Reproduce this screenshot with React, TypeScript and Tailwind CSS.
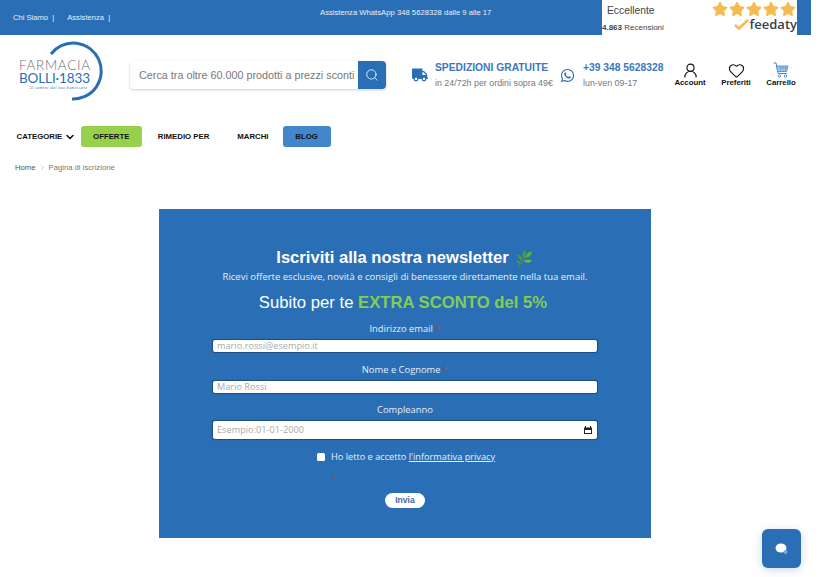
import { ChevronDown, ChevronRight, Heart, Search, UserRound } from "lucide-react";
import { FaStar, FaTruck, FaWhatsapp } from "react-icons/fa";

const sans = "font-['Liberation_Sans',Arial,sans-serif]";
const open = "font-['Open_Sans',sans-serif]";

const TopBar = () => (
    <div className={`flex h-[35px] bg-[#2a6fb5] text-white ${sans}`}>
        <div className="flex w-[602px] shrink-0">
            <div className="flex w-[307px] shrink-0 items-start gap-[13px] pl-[13px] pt-[12px] text-[7.6px] leading-[11px] text-[#e8f0f8]">
                <span>Chi Siamo &nbsp;|</span>
                <span>Assistenza &nbsp;|</span>
            </div>
            <div className="pl-[13px] pt-[8px] text-[7.7px] leading-[10px] text-[#e8f0f8]">
                Assistenza WhatsApp 348 5628328 dalle 9 alle 17
            </div>
        </div>
        <div className="flex w-[195px] shrink-0 justify-between bg-white text-[#444]">
            <div className="flex flex-col">
                <span className="pl-[5px] pt-[4px] text-[10.3px] leading-[14px]">Eccellente</span>
                <span className="pt-[4px] text-[8px] leading-[11px]">
                    <b>4.863</b> Recensioni
                </span>
            </div>
            <div className="flex flex-col items-end">
                <div className="flex gap-[1px] pr-[1px] pt-[1px] text-[#f3bb52]">
                    <FaStar size={16} />
                    <FaStar size={16} />
                    <FaStar size={16} />
                    <FaStar size={16} />
                    <FaStar size={16} />
                </div>
                <div className="flex items-center gap-[1px] text-[13px] leading-[14px] text-[#3a4049]">
                    <svg width="15" height="11" viewBox="0 0 15 11">
                        <path d="M1 6l4 3.5L14 1" fill="none" stroke="#f3bb52" strokeWidth="2.6" />
                    </svg>
                    <span className="font-['Open_Sans',sans-serif] font-semibold">feedaty</span>
                </div>
            </div>
        </div>
    </div>
);

const Logo = () => (
    <svg width="90" height="62" viewBox="0 0 90 62" className="mb-[8px] shrink-0">
        <path d="M 33 14 A 28 28 0 1 1 54 59" fill="none" stroke="#2a6fb5" strokeWidth="3" />
        <text x="1" y="30" fontFamily="Lato, sans-serif" fontWeight="300" fontSize="13.5" textLength="71" fill="#6b6f73">
            FARMACIA
        </text>
        <text x="1" y="43" fontFamily="Lato, sans-serif" fontWeight="400" fontSize="13.5" textLength="71" fill="#2a6fb5">
            BOLLI·1833
        </text>
        <text x="11" y="48.5" fontFamily="'Liberation Serif', serif" fontStyle="italic" fontSize="4.4" textLength="58" fill="#2a6fb5">
            Al centro del tuo benessere
        </text>
    </svg>
);

const Cart = () => (
    <svg width="16" height="16" viewBox="0 0 16 16" fill="none" stroke="#3b8ad0">
        <path d="M0.5 1h2.5l2.2 10.5h8.5" strokeWidth="1" />
        <path d="M3.6 4h11.4l-1.4 5.5h-8.8z" fill="#a9cdea" strokeWidth="0.8" />
        <path d="M6 6h8M7.5 4v5.5M10 4v5.5M12.5 4v5.5" strokeWidth="0.5" />
        <circle cx="6.5" cy="14" r="1.2" strokeWidth="0.9" />
        <circle cx="12.5" cy="14" r="1.2" strokeWidth="0.9" />
    </svg>
);

const Header = () => (
    <div className={`flex h-[80px] items-center pl-[18px] ${sans}`}>
        <Logo />
        <div className="ml-[22px] flex h-[28px] w-[256px] shrink-0 rounded-[4px] shadow-[0_1px_3px_rgba(0,0,0,0.2)]">
            <input
                className="h-full w-[228px] overflow-hidden rounded-l-[4px] bg-white pl-[9px] text-[10.8px] text-[#555] outline-none placeholder:text-[#777]"
                placeholder="Cerca tra oltre 60.000 prodotti a prezzi sconti"
            />
            <div className="flex w-[28px] items-center justify-center rounded-r-[4px] bg-[#2a6fb5]">
                <Search size={14} color="#fff" strokeWidth={1.4} />
            </div>
        </div>
        <div className="ml-[26px] flex items-center">
            <FaTruck size={16} color="#2a6fb5" />
        </div>
        <div className="ml-[7px] flex w-[125px] shrink-0 flex-col">
            <span className="whitespace-nowrap text-[10.3px] font-bold leading-[15px] text-[#3b78bb]">SPEDIZIONI GRATUITE</span>
            <span className="mt-[1px] whitespace-nowrap text-[8.9px] leading-[14px] text-[#777]">in 24/72h per ordini sopra 49€</span>
        </div>
        <FaWhatsapp size={15} color="#2a6fb5" className="shrink-0" />
        <div className="ml-[8px] flex w-[84px] shrink-0 flex-col">
            <span className="whitespace-nowrap text-[10.3px] font-bold leading-[15px] text-[#3b78bb]">+39 348 5628328</span>
            <span className="mt-[1px] text-[8.9px] leading-[14px] text-[#777]">lun-ven 09-17</span>
        </div>
        <div className="flex text-[7.8px] font-bold leading-[10px] text-[#111]">
            <div className="flex w-[46px] flex-col items-center">
                <UserRound size={17} strokeWidth={1.6} />
                <span className="mt-[-1px]">Account</span>
            </div>
            <div className="flex w-[46px] flex-col items-center">
                <Heart size={17} strokeWidth={1.6} />
                <span className="mt-[-1px]">Preferiti</span>
            </div>
            <div className="flex w-[44px] flex-col items-center">
                <Cart />
                <span>Carrello</span>
            </div>
        </div>
    </div>
);

const Nav = () => (
    <div className={`flex h-[21px] items-center pl-[16.5px] text-[7.8px] font-bold text-[#111] ${sans}`}>
        <span>CATEGORIE</span>
        <ChevronDown size={12} strokeWidth={3} className="ml-[1.5px]" />
        <span className="ml-[5px] flex h-[21px] w-[61px] items-center justify-center rounded-[3px] bg-[#97d04d]">OFFERTE</span>
        <span className="ml-[16px]">RIMEDIO PER</span>
        <span className="ml-[28px]">MARCHI</span>
        <span className="ml-[14px] flex h-[21px] w-[48px] items-center justify-center rounded-[3px] bg-[#4287cb]">BLOG</span>
    </div>
);

const Field = ({ label, placeholder, required }: any) => (
    <div className="flex flex-col items-center">
        <label className="text-[9.4px] leading-[14px] text-[#e6eef7]">
            {label}
            {required && <span className="text-[#b5473f]"> *</span>}
        </label>
        <input
            placeholder={placeholder}
            className="mt-[4px] h-[12px] w-[384px] rounded-[2px] bg-white pl-[4px] text-[9.2px] outline-none shadow-[0_0_1px_1px_rgba(20,40,70,0.5)] placeholder:text-[#aaa]"
        />
    </div>
);

const Leaf = () => (
    <svg width="19" height="19" viewBox="0 0 20 20" className="ml-[6px]">
        <path d="M3 19 C7 14 10 10 15 3" fill="none" stroke="#4d9a3a" strokeWidth="1.2" />
        <path d="M9 10 C7 5 9 3 10 1 C12 4 12 7 9 10Z" fill="#4f9e3a" />
        <path d="M11 9 C12 5 15 3 18 3 C17 7 15 9 11 9Z" fill="#5fae42" />
        <path d="M7 13 C4 10 3 8 2 5 C6 6 8 9 7 13Z" fill="#4d9a3a" />
        <path d="M9 13 C12 11 15 11 18 12 C15 15 12 15 9 13Z" fill="#6cb84a" />
        <path d="M6 16 C4 15 2 14 1 12 C4 12 6 13 6 16Z" fill="#4f9e3a" />
    </svg>
);

const Card = () => (
    <form className={`ml-[159px] mt-[36px] flex h-[329px] w-[492px] flex-col items-center bg-[#2a6fb5] pt-[39px] text-white ${open}`}>
        <h2 className={`flex h-[21px] items-center text-[16.6px] font-bold ${sans}`}>
            Iscriviti alla nostra newsletter
            <Leaf />
        </h2>
        <p className="text-[9.5px] leading-[16px] text-[#e6eef7]">
            Ricevi offerte esclusive, novità e consigli di benessere direttamente nella tua email.
        </p>
        <p className={`mr-[4px] mt-[7px] text-[16.7px] leading-[22px] ${sans}`}>
            Subito per te <b className="text-[#84cc56]">EXTRA SCONTO del 5%</b>
        </p>
        <div className="mt-[8px]">
            <Field label="Indirizzo email" placeholder="mario.rossi@esempio.it" required />
        </div>
        <div className="mt-[11px]">
            <Field label="Nome e Cognome" placeholder="Mario Rossi" required />
        </div>
        <div className="mt-[10px] flex flex-col items-center">
            <label className="text-[9.4px] leading-[14px] text-[#e6eef7]">Compleanno</label>
            <div className="mt-[4px] flex h-[18px] w-[384px] items-center rounded-[2px] bg-white pl-[4px] pr-[4px] shadow-[0_0_1px_1px_rgba(20,40,70,0.5)]">
                <input placeholder="Esempio:01-01-2000" className="min-w-0 flex-1 text-[9.2px] outline-none placeholder:text-[#aaa]" />
                <svg width="10" height="10" viewBox="0 0 10 10">
                    <path d="M1 2.5h8v6.5h-8z M2 5h6v3h-6z" fill="#222" fillRule="evenodd" />
                    <path d="M2.5 1v2M7.5 1v2" stroke="#222" />
                </svg>
            </div>
        </div>
        <div className="ml-[2px] mt-[11px] flex items-center text-[9.2px] leading-[14px] text-[#e6eef7]">
            <span className="h-[8px] w-[8px] rounded-[1.5px] bg-white" />
            <span className="ml-[6px]">
                Ho letto e accetto <u>l'informativa privacy</u>
            </span>
        </div>
        <span className="ml-[-140px] mt-[11px] h-[6px] text-[8px] leading-[6px] text-[#a84a55]">*</span>
        <button type="button" className={`mt-[12px] h-[15px] w-[40px] rounded-full bg-white text-[8.6px] font-bold text-[#3f6aa0] ${sans}`}>
            Invia
        </button>
    </form>
);

const App = () => {
    return (
        <div className="relative h-[577px] w-[820px] overflow-hidden bg-white">
            <div className="w-[811px]">
                <TopBar />
                <Header />
                <div className="mt-[11px]">
                    <Nav />
                </div>
                <div className={`mt-[15px] flex items-center pl-[15px] text-[7.7px] leading-[11px] ${sans}`}>
                    <span className="text-[#555]">Home</span>
                    <ChevronRight size={7} color="#999" className="mx-[3px]" />
                    <span className="text-[#777]">Pagina di iscrizione</span>
                </div>
                <Card />
            </div>
            <div className="absolute left-[762px] top-[529px] flex h-[39px] w-[39px] items-center justify-center rounded-[6px] bg-[#2a6fb5] shadow-[0_2px_8px_rgba(42,111,181,0.25)]">
                <svg width="16" height="16" viewBox="0 0 16 16">
                    <ellipse cx="7" cy="7" rx="5.5" ry="4.5" fill="#fff" />
                    <circle cx="11.5" cy="11" r="2" fill="#7aa6d8" />
                </svg>
            </div>
        </div>
    );
};

export default App;
